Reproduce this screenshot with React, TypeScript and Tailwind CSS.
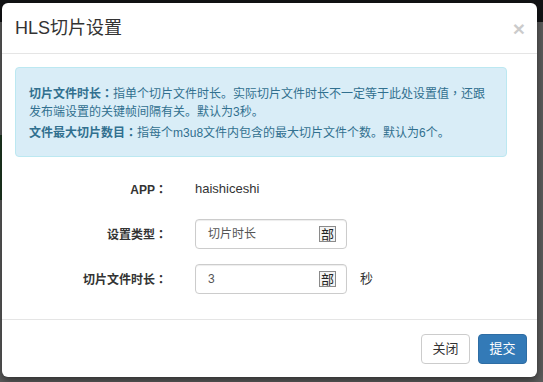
import React from "react";

const Colon = () => <span className="font-['Noto_Sans_CJK_TC',sans-serif]">：</span>;

function Spinner() {
  return (
    <span className="ml-auto flex h-[16px] w-[17px] items-center justify-center border border-[#8a8a8a] bg-[#f3f3f3] text-[13px] leading-none text-[#222]">
      部
    </span>
  );
}

function FieldInput({ value }: { value: string }) {
  return (
    <div className="flex h-[30px] w-[152px] items-center rounded-[4px] border border-[#ccc] bg-white pl-[12px] pr-[10px] text-[12px] text-[#555] shadow-[inset_0_1px_1px_rgba(0,0,0,0.075)]">
      <span>{value}</span>
      <Spinner />
    </div>
  );
}

export default function App() {
  return (
    <div className="relative h-[382px] w-[543px] overflow-hidden bg-[#5c5c5c] font-['Liberation_Sans','Noto_Sans_CJK_SC',sans-serif]">
      {/* backdrop: dimmed page behind */}
      <div className="h-[22px] bg-[#121315]" />
      <div className="mt-[113px] h-[65px] w-[4px] bg-[#1f3a22]" />

      <div className="absolute left-[2px] top-[3px] flex h-[374px] w-[535px] flex-col rounded-[6px] bg-white shadow-[0_3px_9px_rgba(0,0,0,0.5)]">
        <div className="flex h-[51px] items-center justify-between border-b border-[#e5e5e5] pl-[13px] pr-[12px]">
          <h4 className="text-[18px] text-[#333]">HLS切片设置</h4>
          <span className="text-[21px] font-bold leading-none text-[#000] opacity-20">×</span>
        </div>

        <div className="px-[13px] pt-[13px]">
          <div className="w-[492px] whitespace-nowrap rounded-[4px] border border-[#bce8f1] bg-[#d9edf7] px-[13px] pb-[14px] pt-[16px] text-[12px] leading-[18px] text-[#31708f]">
            <p>
              <b>
                切片文件时长
                <Colon />
              </b>
              指单个切片文件时长。实际切片文件时长不一定等于此处设置值
              <span className="font-['Noto_Sans_CJK_TC',sans-serif]">，</span>
              还跟
              <br />
              发布端设置的关键帧间隔有关。默认为3秒。
            </p>
            <p className="mt-[2px]">
              <b>
                文件最大切片数目
                <Colon />
              </b>
              指每个m3u8文件内包含的最大切片文件个数。默认为6个。
            </p>
          </div>

          <div className="mt-[17px] flex flex-col gap-[15px] text-[12px] text-[#333]">
            <div className="flex h-[30px] items-center">
              <label className="w-[152px] text-right font-bold">
                APP
                <Colon />
              </label>
              <span className="ml-[28px] text-[13px]">haishiceshi</span>
            </div>
            <div className="flex h-[30px] items-center">
              <label className="w-[152px] text-right font-bold">
                设置类型
                <Colon />
              </label>
              <div className="ml-[28px]">
                <FieldInput value="切片时长" />
              </div>
            </div>
            <div className="flex h-[30px] items-center">
              <label className="w-[152px] text-right font-bold">
                切片文件时长
                <Colon />
              </label>
              <div className="ml-[28px]">
                <FieldInput value="3" />
              </div>
              <span className="ml-[13px] text-[13px]">秒</span>
            </div>
          </div>
        </div>

        <div className="mt-auto flex h-[58px] items-center justify-end gap-[8px] border-t border-[#e5e5e5] pr-[10px] pt-[1px]">
          <button className="h-[30px] w-[49px] rounded-[4px] border border-[#ccc] bg-white text-[13px] text-[#333]">
            关闭
          </button>
          <button className="h-[30px] w-[49px] rounded-[4px] border border-[#2e6da4] bg-[#337ab7] text-[13px] text-white">
            提交
          </button>
        </div>
      </div>
    </div>
  );
}
